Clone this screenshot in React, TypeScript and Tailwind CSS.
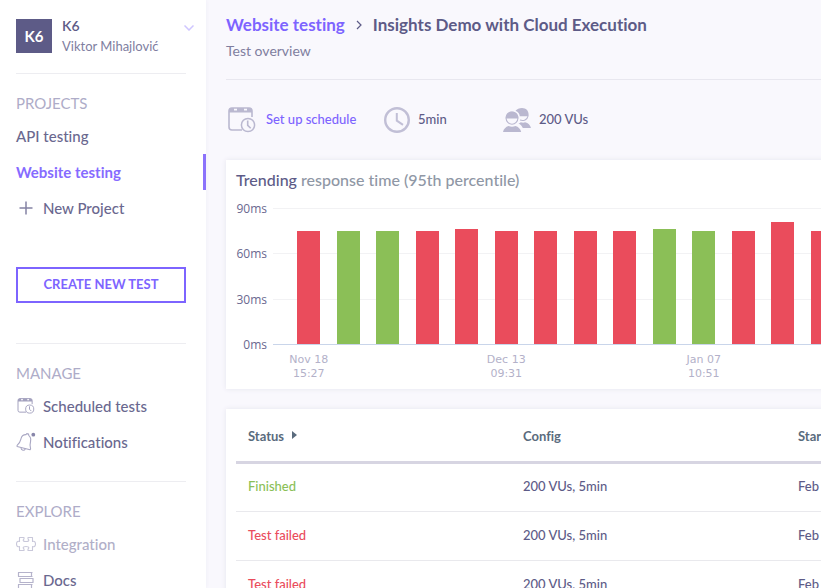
import type { ReactNode } from "react";

const red = "bg-[#ea4c5c]";
const green = "bg-[#8bbf57]";

const bars = [
  { ms: 75, color: red, label: ["Nov 18", "15:27"] },
  { ms: 75, color: green },
  { ms: 75, color: green },
  { ms: 75, color: red },
  { ms: 76, color: red },
  { ms: 75, color: red, label: ["Dec 13", "09:31"] },
  { ms: 75, color: red },
  { ms: 75, color: red },
  { ms: 75, color: red },
  { ms: 76, color: green },
  { ms: 75, color: green, label: ["Jan 07", "10:51"] },
  { ms: 75, color: red },
  { ms: 81, color: red },
  { ms: 75, color: red },
];

const rows = [
  { status: "Finished", tone: "text-[#8bbf57]" },
  { status: "Test failed", tone: "text-[#ea4c5c]" },
  { status: "Test failed", tone: "text-[#ea4c5c]" },
];

function CalendarIcon({ className }: { className: string }) {
  return (
    <svg viewBox="0 0 28 26" className={className} fill="none" stroke="currentColor" aria-hidden="true">
      <path d="M24 10V4a3 3 0 0 0-3-3H4a3 3 0 0 0-3 3v16a3 3 0 0 0 3 3h10" strokeWidth="1.6" />
      <path d="M1 5.500V4a3 3 0 0 1 3-3h2v2.500h3V1h7v2.500h3V1h2a3 3 0 0 1 3 3v1.500z" fill="currentColor" stroke="none" />
      <circle cx="20" cy="18" r="6.600" strokeWidth="1.500" />
      <path d="M19.700 13.500v4.800l3 3" strokeWidth="1.600" />
    </svg>
  );
}

function ClockIcon() {
  return (
    <svg viewBox="0 0 26 26" className="size-[26px] text-[#c1bfd6]" fill="none" stroke="currentColor" aria-hidden="true">
      <circle cx="13" cy="13" r="11.800" strokeWidth="2.400" />
      <path d="M12.800 6v7.600l6.200 4.200" strokeWidth="2" />
    </svg>
  );
}

function UsersIcon() {
  return (
    <svg viewBox="0 0 28 24" className="h-6 w-7 text-[#bab8d0]" fill="currentColor" aria-hidden="true">
      <path d="M12.500 2.800C13.800 1.100 16.300 0 19 0c4 0 6.600 2.800 6.600 6.600v1.600h-8.800C16.700 5.800 15.200 3.800 12.500 2.800z" />
      <path d="M17 12.100c3.600 1.300 7.200-.3 8-4" fill="none" stroke="currentColor" strokeWidth="1.100" />
      <path d="M15.500 15.600c1.200-.4 1.800-.9 2.300-1.400 1.500.6 3 .6 4.300.1 3.100.8 5.200 2.800 5.900 5.700h-8.200c-1-2-2.300-3.600-4.300-4.400z" />
      <path d="M2.700 10.500V9.800C2.700 6 5.300 3.600 9 3.600s6.300 2.400 6.300 6.200v.7z" />
      <circle cx="9" cy="10.300" r="5.900" fill="none" stroke="currentColor" strokeWidth="1.100" />
      <path d="M0 24c.6-3.100 2.800-5.200 5.500-6 2.200.9 4.800.9 7 0 2.900.8 5 2.900 5.700 6z" />
    </svg>
  );
}

function PlusIcon() {
  return (
    <svg viewBox="0 0 20 20" className="size-5" fill="none" stroke="#8482a4" strokeWidth="1.500" aria-hidden="true">
      <path d="M10 3.500v13M3.500 10h13" />
    </svg>
  );
}

function BellIcon() {
  return (
    <svg viewBox="0 0 20 20" className="size-5" fill="none" stroke="#a9a7c3" strokeWidth="1.100" strokeLinejoin="round" aria-hidden="true">
      <path d="M10.300 2.600c-2.600-.2-4.500 1.400-5.200 3.700-.7 2.700-.9 4.600-4 7.100v1.100l13 3.300.5-.8c-1.100-2.900-.7-5.200 0-8 .5-2.500-.2-4.300-2-5.600" />
      <path d="M10.300 2.600l.4-1 1.900.5v1.300M5 15.700c0 1.400.7 2.200 1.900 2.500 1.100.2 1.900-.2 2.400-1.300" />
      <circle cx="17.300" cy="2.700" r="1.900" fill="#8886aa" stroke="none" />
    </svg>
  );
}

function PuzzleIcon() {
  return (
    <svg viewBox="0 0 20 20" className="size-5" fill="none" stroke="#c9c8da" strokeWidth="1.100" strokeLinejoin="round" aria-hidden="true">
      <path d="M3.500 3.500h4.500v1.500c-.6.300-.8.700-.8 1.200C7.200 7 8.500 7.500 10 7.500s2.800-.5 2.800-1.300c0-.5-.2-.9-.8-1.200V3.500h4.500v4c1-.5 3-.5 3 2.500s-2 3-3 2.500v4H12V15c.6-.3.8-.7.8-1.200 0-.8-1.300-1.300-2.800-1.300s-2.800.5-2.800 1.300c0 .5.200.9.8 1.200v1.500H3.500v-4c-1 .5-3 .5-3-2.500s2-3 3-2.500z" />
    </svg>
  );
}

function BooksIcon() {
  return (
    <svg viewBox="0 0 20 20" className="size-5" fill="none" stroke="#b5b3cb" strokeWidth="1.200" aria-hidden="true">
      <path d="M2 2.500h14.500M2 6.500h14.500M2.500 2.500v4M15.500 2.500v4M3.500 8.500h14M3.500 12.500h14M4 8.500v4M17 8.500v4M2 14.500h14.500M2 18.500h14.500M2.500 14.500v4M15.500 14.500v4" />
    </svg>
  );
}

function NavItem({ icon, children, muted }: { icon?: ReactNode; children: ReactNode; muted?: boolean }) {
  return (
    <li>
      <a href="#" className={`flex h-9 items-center gap-[7px] ${muted ? "text-[#b1afc8]" : "text-[#6a688f]"}`}>
        {icon}
        {children}
      </a>
    </li>
  );
}

function NavTitle({ children }: { children: ReactNode }) {
  return <h2 className="mt-5 mb-1.5 leading-[18px] font-normal text-[#aeacc8]">{children}</h2>;
}

function Sidebar() {
  return (
    <aside className="z-10 w-[206px] shrink-0 bg-white pl-4 text-[15px] font-medium shadow-[0_0_4px_#eeedf6]">
      <button type="button" className="flex w-full items-start pt-4 pr-3 pb-[17px] text-left">
        <span className="mt-[3px] flex h-[34px] w-9 items-center justify-center bg-[#5d5b87] text-[15px] font-bold text-white">
          K6
        </span>
        <span className="ml-2.5 flex-1 whitespace-nowrap">
          <span className="block text-[14px] leading-5 font-semibold text-[#5d5b87]">K6</span>
          <span className="block text-[13px] leading-5 font-normal text-[#807e9f]">Viktor Mihajlović</span>
        </span>
        <svg viewBox="0 0 10 6" className="mt-[9px] h-1.5 w-2.5" fill="none" stroke="#cfc6ff" strokeWidth="1.500" aria-hidden="true">
          <path d="M.5.500 5 5 9.500.5" />
        </svg>
      </button>

      <nav>
        <section className="mr-5 border-t border-[#ededf1]">
          <NavTitle>PROJECTS</NavTitle>
        </section>
        <ul>
          <NavItem>API testing</NavItem>
          <li>
            <a href="#" aria-current="page" className="flex h-9 items-center border-r-3 border-[#8b72fb] font-bold text-[#866bff]">
              Website testing
            </a>
          </li>
          <NavItem icon={<PlusIcon />}>New Project</NavItem>
        </ul>
        <div className="mr-5 pt-[41px] pb-10">
          <button type="button" className="h-9 w-full border-2 border-[#7d64ff] text-[13px] font-bold text-[#7d64ff]">
            CREATE NEW TEST
          </button>
        </div>
        <section className="mr-5 border-t border-[#ededf1] pb-[21px]">
          <NavTitle>MANAGE</NavTitle>
          <ul>
            <NavItem icon={<CalendarIcon className="h-4 w-5 text-[#a3a1be]" />}>Scheduled tests</NavItem>
            <NavItem icon={<BellIcon />}>Notifications</NavItem>
          </ul>
        </section>
        <section className="mr-5 border-t border-[#ededf1]">
          <NavTitle>EXPLORE</NavTitle>
          <ul>
            <NavItem icon={<PuzzleIcon />} muted>Integration</NavItem>
            <NavItem icon={<BooksIcon />}>Docs</NavItem>
          </ul>
        </section>
      </nav>
    </aside>
  );
}

function TrendChart() {
  const slots = Array.from({ length: 26 }, (_, i) => bars[i]);
  return (
    <section className="bg-white px-2.5 pt-2.5 pb-2 shadow-[0_0_5px_#e6e5ee]">
      <h2 className="text-base leading-5 font-medium text-[#8f97a5]">
        <span className="text-[#5d5b87]">Trending</span> response time (95th percentile)
      </h2>
      <div className="mt-[18px] flex gap-1.5">
        <div className="flex h-[137px] w-[31px] flex-col justify-between text-right font-['Open_Sans',sans-serif] text-xs text-[#6a688f]">
          <span className="h-px leading-px">90ms</span>
          <span className="h-px leading-px">60ms</span>
          <span className="h-px leading-px">30ms</span>
          <span className="h-px leading-px">0ms</span>
        </div>
        <div className="flex-1">
          <div className="grid">
            <div className="col-start-1 row-start-1 flex h-[137px] flex-col justify-between">
              <div className="h-px bg-[#f2f2f4]" />
              <div className="h-px bg-[#f2f2f4]" />
              <div className="h-px bg-[#f2f2f4]" />
              <div className="h-px bg-[#c9d5ea]" />
            </div>
            <div className="col-start-1 row-start-1 flex h-[136px] items-end pr-5 pl-4">
              {slots.map((bar, i) => (
                <div key={i} className="flex h-full flex-1 items-end justify-center">
                  {bar && <div className={`w-[23px] ${bar.color}`} style={{ height: `${(bar.ms / 90) * 100}%` }} />}
                </div>
              ))}
            </div>
          </div>
          <div className="mt-2 flex h-7 pr-5 pl-4 text-center font-['DejaVu_Sans',sans-serif] text-[11px] leading-[14px] whitespace-nowrap text-[#b3b1c9]">
            {slots.map((bar, i) => (
              <div key={i} className="flex min-w-0 flex-1 basis-0 justify-center">
                {bar?.label && (
                  <div>
                    {bar.label[0]}
                    <br />
                    {bar.label[1]}
                  </div>
                )}
              </div>
            ))}
          </div>
        </div>
      </div>
    </section>
  );
}

function RunsTable() {
  return (
    <section className="bg-white px-2.5 pt-[3px] shadow-[0_0_5px_#e6e5ee]">
      <table className="w-full table-fixed text-left text-[13px] text-[#5d5b87]">
        <thead>
          <tr className="h-[50px] border-b-3 border-[#d7d5e2] text-[#5a6b7d]">
            <th className="px-3">
              <button type="button" className="flex items-center gap-2 font-bold">
                Status
                <svg viewBox="0 0 5 8" className="mb-0.5 h-2 w-[5px]" fill="currentColor" aria-hidden="true">
                  <path d="M0 0l5 4-5 4z" />
                </svg>
              </button>
            </th>
            <th className="px-3 font-bold">Config</th>
            <th className="px-3 font-bold">Started</th>
            <th className="px-3" />
          </tr>
        </thead>
        <tbody>
          {rows.map((row, i) => (
            <tr key={i} className="h-[49px] border-b border-[#e9e9ed] font-medium">
              <td className={`px-3 ${row.tone}`}>{row.status}</td>
              <td className="px-3">200 VUs, 5min</td>
              <td className="px-3">Feb 01</td>
              <td className="px-3" />
            </tr>
          ))}
        </tbody>
      </table>
    </section>
  );
}

export default function App() {
  return (
    <div className="flex h-screen overflow-hidden bg-[#f9f8fd] font-['Lato',sans-serif] [font-variant-ligatures:none]">
      <Sidebar />
      <main className="min-w-0 flex-1 overflow-hidden pl-5">
        <div className="min-w-[1120px]">
          <header className="border-b border-[#e8e7ef] pt-3.5 pb-[18px]">
            <h1 className="flex items-center text-[17px] leading-[22px] font-bold text-[#5d5b87]">
              <a href="#" className="text-[#7d64ff]">Website testing</a>
              <svg viewBox="0 0 6 10" className="mx-[11px] h-2.5 w-1.5" fill="none" stroke="currentColor" strokeWidth="1.200" aria-hidden="true">
                <path d="M1 1l4 4-4 4" />
              </svg>
              Insights Demo with Cloud Execution
            </h1>
            <p className="mt-[5px] text-sm text-[#807e9f]">Test overview</p>
          </header>
          <div className="flex h-20 items-center text-[13px] font-medium text-[#5d5b87]">
            <div className="flex w-[158px] items-center gap-2.5 pl-0.5">
              <CalendarIcon className="h-[26px] w-7 text-[#bab8d0]" />
              <a href="#" className="text-[#7d64ff]">Set up schedule</a>
            </div>
            <div className="flex w-[119px] items-center gap-2">
              <ClockIcon />
              5min
            </div>
            <div className="flex items-center gap-2">
              <UsersIcon />
              200 VUs
            </div>
          </div>
          <div className="flex flex-col gap-5">
            <TrendChart />
            <RunsTable />
          </div>
        </div>
      </main>
    </div>
  );
}
